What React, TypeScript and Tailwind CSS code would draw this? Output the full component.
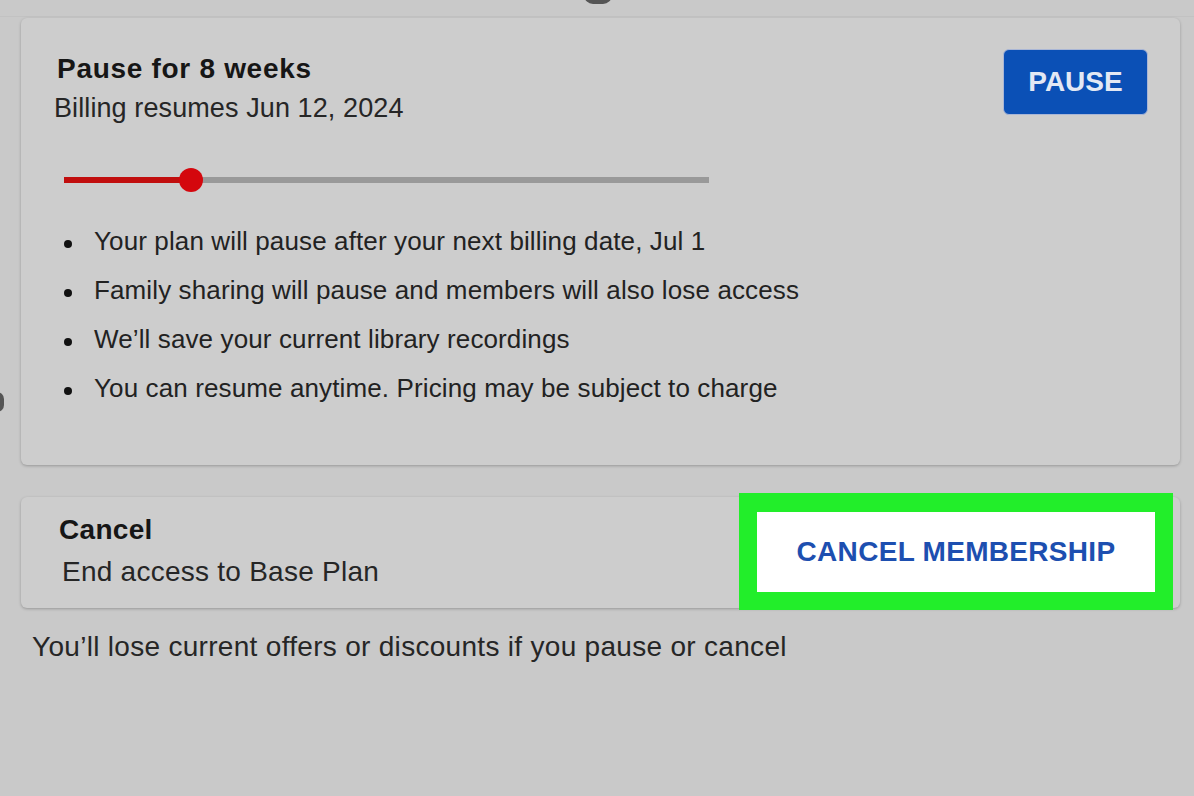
import React from "react";

const bullets = [
  "Your plan will pause after your next billing date, Jul 1",
  "Family sharing will pause and members will also lose access",
  "We\u2019ll save your current library recordings",
  "You can resume anytime. Pricing may be subject to charge",
];

export default function App() {
  return (
    <div
      className="relative w-[1194px] h-[796px] overflow-hidden bg-[#c9c9c9] text-[#222]"
      style={{ fontFamily: '"Liberation Sans", Arial, sans-serif' }}
    >
      <div className="absolute left-[584px] -top-[14px] w-[28px] h-[18px] rounded-full bg-[#555]" />
      <div className="absolute -left-[10px] top-[392px] w-[14px] h-[20px] rounded-full bg-[#555]" />
      <div className="h-[17px] border-b border-[#c2c2c2]" />
      <div className="pl-[21px] pr-[14px] pt-[1px]">
        <div className="relative h-[447px] rounded-[6px] bg-[#cdcdcd] shadow-[0_1px_3px_rgba(0,0,0,0.25)] pl-[36px] pr-[32px] pt-[35px]">
          <div className="flex justify-between items-start">
            <div>
              <div className="text-[28px] font-bold leading-[32px] text-[#161616] tracking-[0.7px]">Pause for 8 weeks</div>
              <div className="text-[27px] leading-[32px] mt-[7px] -ml-[3px] text-[#262626] tracking-[0.1px]">
                Billing resumes Jun 12, 2024
              </div>
            </div>
            <button className="-mt-[4px] w-[145px] h-[66px] rounded-[6px] bg-[#0b50b6] border border-[#a9b6d6] text-[#e3e8f4] text-[28px] font-bold">
              PAUSE
            </button>
          </div>
          <div className="relative mt-[44px] ml-[7px] w-[645px] h-[24px] flex items-center">
            <div className="h-[6px] w-full flex">
              <div className="w-[127px] bg-[#c10e0e]" />
              <div className="flex-1 bg-[#999999]" />
            </div>
            <div className="absolute left-[115px] top-0 w-[24px] h-[24px] rounded-full bg-[#d4070d]" />
          </div>
          <ul className="mt-[34px] flex flex-col gap-[19px]">
            {bullets.map((b) => (
              <li key={b} className="flex items-center text-[26px] leading-[30px] text-[#222] tracking-[0.12px]">
                <span className="w-[8px] h-[8px] rounded-full bg-[#111] ml-[7px] mr-[22px] mt-[6px]" />
                {b}
              </li>
            ))}
          </ul>
        </div>
        <div className="mt-[32px] h-[111px] rounded-[6px] bg-[#cdcdcd] shadow-[0_1px_3px_rgba(0,0,0,0.25)] flex items-stretch">
          <div className="flex-1 pl-[38px] pt-[17px]">
            <div className="text-[28px] font-bold leading-[32px] text-[#161616] tracking-[0.3px]">Cancel</div>
            <div className="text-[28px] leading-[32px] mt-[10px] ml-[3px] text-[#262626] tracking-[0.25px]">
              End access to Base Plan
            </div>
          </div>
          <div className="-mt-[4px] -mb-[2px] mr-[7px] w-[434px] bg-[#22ee2a] p-[18px] pt-[19px]">
            <div className="h-full bg-white flex items-center justify-center">
              <span className="text-[28px] font-bold text-[#1d4fb0] tracking-[0.3px]">CANCEL MEMBERSHIP</span>
            </div>
          </div>
        </div>
      </div>
      <div className="pl-[32px] mt-[23px] text-[28px] leading-[32px] text-[#262626] tracking-[0.3px]">
        You&rsquo;ll lose current offers or discounts if you pause or cancel
      </div>
    </div>
  );
}
